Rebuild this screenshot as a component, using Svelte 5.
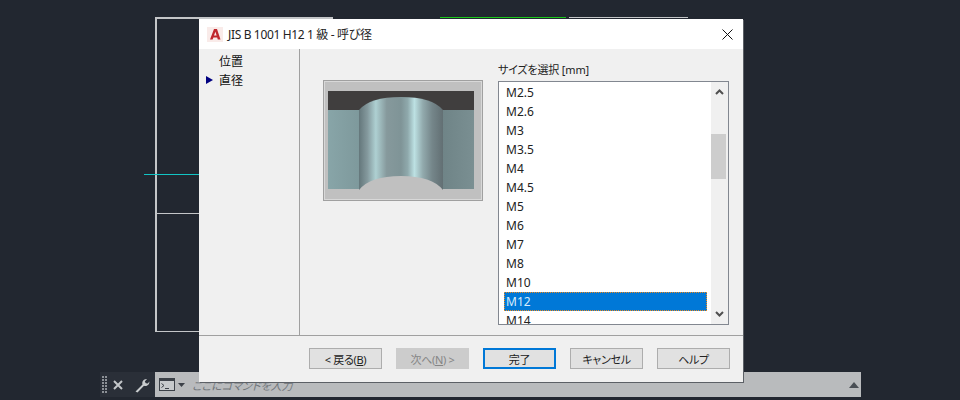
<script>
  const sizes = ["M2.5", "M2.6", "M3", "M3.5", "M4", "M4.5", "M5", "M6", "M7", "M8", "M10", "M12", "M14"];
  let selected = $state("M12");
</script>

<main class="desktop">
  <!-- drawing on the CAD canvas -->
  <div class="line white" style="left:156px;top:17px;width:177px;height:2px"></div>
  <div class="line white" style="left:155px;top:17px;width:2px;height:315px"></div>
  <div class="line white" style="left:156px;top:213px;width:44px;height:1px"></div>
  <div class="line white" style="left:156px;top:331px;width:44px;height:1px"></div>
  <div class="line cyan" style="left:144px;top:174px;width:56px;height:1px"></div>
  <div class="line green" style="left:440px;top:17px;width:126px;height:1px"></div>
  <div class="line white" style="left:569px;top:17px;width:119px;height:1px"></div>

  <div class="commandbar">
    <div class="tools">
      <svg class="grip" width="6" height="18" viewBox="0 0 6 18">
        {#each [0, 1, 2, 3, 4, 5] as r}
          <rect x="0" y={r * 3} width="2" height="2" fill="#8d9197" />
          <rect x="3" y={r * 3} width="2" height="2" fill="#8d9197" />
        {/each}
      </svg>
      <svg class="close" width="12" height="12" viewBox="0 0 12 12">
        <path d="M2 2L10 10M10 2L2 10" stroke="#c3c6c9" stroke-width="2" />
      </svg>
      <svg class="wrench" width="16" height="16" viewBox="0 0 16 16">
        <path d="M1.5 14.5L8.5 7.5C7.6 4.6 9.8 1.6 13 2L10.8 4.4L11.8 6.2L13.8 6.4L15.4 4.4C15.6 7.6 12.8 9.6 10 8.8L3.5 15.6Z" fill="#c9ccce" />
      </svg>
    </div>
    <div class="input">
      <svg class="prompt" width="16" height="13" viewBox="0 0 16 13">
        <rect x="0.5" y="0.5" width="15" height="12" fill="#c7cacc" stroke="#3c4148" />
        <rect x="0" y="0" width="16" height="3" fill="#3c4148" />
        <path d="M2.5 5.5L5 7.5L2.5 9.5M6 10.5H10" stroke="#3c4148" fill="none" />
      </svg>
      <svg class="caret" width="7" height="4" viewBox="0 0 7 4"><path d="M0 0H7L3.5 4Z" fill="#3c4148" /></svg>
      <span class="hint">ここにコマンドを入力</span>
      <svg class="history" width="10" height="6" viewBox="0 0 10 6"><path d="M5 0L10 6H0Z" fill="#4a4f55" /></svg>
    </div>
  </div>

  <section class="dialog">
    <header class="titlebar">
      <svg class="logo" width="16" height="15" viewBox="0 0 16 15">
        <rect width="16" height="15" fill="#f9ebe9" />
        <path d="M3 12.5L7 2H10L13.5 12.5H10.8L10.2 10.6H6.4L5.6 12.5ZM7 8.6H9.6L8.4 4.8Z" fill="#c0272d" fill-rule="evenodd" />
      </svg>
      <span class="title">JIS B 1001 H12 1 級 - 呼び径</span>
      <svg class="dismiss" width="11" height="11" viewBox="0 0 11 11">
        <path d="M0.5 0.5L10.5 10.5M10.5 0.5L0.5 10.5" stroke="#111" stroke-width="1" />
      </svg>
    </header>

    <div class="body">
      <nav class="steps">
        <div class="step">位置</div>
        <div class="step current">直径</div>
      </nav>

      <div class="content">
        <figure class="preview">
          <svg width="146" height="99" viewBox="0 0 146 99">
            <defs>
              <linearGradient id="cyl">
                <stop offset="0" stop-color="#64777b" />
                <stop offset="0.1" stop-color="#84999d" />
                <stop offset="0.2" stop-color="#aed0d2" />
                <stop offset="0.33" stop-color="#86999c" />
                <stop offset="0.5" stop-color="#7f9497" />
                <stop offset="0.58" stop-color="#8fa9ac" />
                <stop offset="0.66" stop-color="#bde1e3" />
                <stop offset="0.76" stop-color="#92aaad" />
                <stop offset="0.87" stop-color="#75868a" />
                <stop offset="1" stop-color="#626f73" />
              </linearGradient>
              <linearGradient id="wallL"><stop offset="0" stop-color="#88a5a8" /><stop offset="1" stop-color="#7e999c" /></linearGradient>
              <linearGradient id="wallR"><stop offset="0" stop-color="#6f8487" /><stop offset="1" stop-color="#7a8f92" /></linearGradient>
            </defs>
            <rect width="146" height="19" fill="#403e3e" />
            <rect y="19" width="31" height="79" fill="url(#wallL)" />
            <rect x="115" y="19" width="31" height="79" fill="url(#wallR)" />
            <path d="M31 19Q42 6 73 6T115 19V99H31Z" fill="url(#cyl)" />
            <path d="M31 99Q42 85 73 85T115 99Z" fill="#c0c0c0" />
          </svg>
        </figure>

        <div class="picker">
          <div class="picker-label">サイズを選択 [mm]</div>
          <div class="listbox">
            <ul>
              {#each sizes as size}
                <!-- svelte-ignore a11y_click_events_have_key_events -->
                <!-- svelte-ignore a11y_no_noninteractive_element_interactions -->
                <li class:active={size === selected} onclick={() => (selected = size)}>{size}</li>
              {/each}
            </ul>
            <div class="scrollbar">
              <svg width="9" height="6" viewBox="0 0 9 6"><path d="M1 5L4.5 1.5L8 5" fill="none" stroke="#505050" stroke-width="2" /></svg>
              <div class="track"><div class="thumb"></div></div>
              <svg width="9" height="6" viewBox="0 0 9 6"><path d="M1 1L4.5 4.5L8 1" fill="none" stroke="#505050" stroke-width="2" /></svg>
            </div>
          </div>
        </div>
      </div>
    </div>

    <footer class="actions">
      <button>&lt; 戻る(<u>B</u>)</button>
      <button disabled>次へ(<u>N</u>) &gt;</button>
      <button class="primary">完了</button>
      <button>キャンセル</button>
      <button>ヘルプ</button>
    </footer>
  </section>
</main>

<style>
  :global(body) {
    margin: 0;
    background: #222730;
  }
  .desktop {
    position: relative;
    width: 960px;
    height: 400px;
    overflow: hidden;
    background: #222730;
    font-family: "Noto Sans", "Noto Sans CJK JP", sans-serif;
    font-size: 12px;
    font-feature-settings: "palt";
    color: #111;
    display: flex;
    flex-direction: column;
    justify-content: flex-end;
  }
  .line {
    position: absolute;
  }
  .white {
    background: #c4c6c8;
  }
  .cyan {
    background: #12c4c4;
  }
  .green {
    background: #1cc81c;
  }

  .commandbar {
    display: flex;
    height: 25px;
    margin: 0 99px 3px 100px;
  }
  .tools {
    width: 55px;
    display: flex;
    align-items: center;
    background: #2a2f38;
  }
  .grip {
    margin-left: 2px;
  }
  .close {
    margin-left: 4px;
  }
  .wrench {
    margin-left: 10px;
  }
  .input {
    flex: 1;
    display: flex;
    align-items: center;
    background: #b9bbbd;
    padding: 0 2px 0 4px;
  }
  .caret {
    margin-left: 3px;
  }
  .hint {
    margin-left: 7px;
    font-size: 11px;
    font-style: italic;
    color: #71767b;
  }
  .history {
    margin-left: auto;
  }

  .dialog {
    position: absolute;
    left: 199px;
    top: 19px;
    width: 544px;
    height: 363px;
    box-sizing: border-box;
    display: flex;
    flex-direction: column;
    background: #f0f0f0;
    box-shadow: 1px 1px 0 #5c6066;
  }
  .titlebar {
    height: 30px;
    flex: none;
    display: flex;
    align-items: center;
    padding: 0 10px 0 8px;
    background: #fff;
  }
  .title {
    margin-left: 5px;
    color: #222;
    letter-spacing: -0.35px;
  }
  .dismiss {
    margin-left: auto;
  }

  .body {
    height: 287px;
    flex: none;
    display: flex;
    border-bottom: 1px solid #a0a0a0;
    box-sizing: border-box;
  }
  .steps {
    width: 101px;
    flex: none;
    box-sizing: border-box;
    border-right: 1px solid #a0a0a0;
    padding-top: 3px;
  }
  .step {
    position: relative;
    height: 19px;
    line-height: 19px;
    padding-left: 20px;
  }
  .step.current::before {
    content: "";
    position: absolute;
    left: 7px;
    top: 5px;
    border-left: 7px solid #000080;
    border-top: 4px solid transparent;
    border-bottom: 4px solid transparent;
  }
  .content {
    flex: 1;
    display: flex;
    align-items: flex-start;
    padding: 12px 14px 0 23px;
  }
  .preview {
    margin: 19px 0 0;
    width: 160px;
    height: 121px;
    box-sizing: border-box;
    flex: none;
    background: #c0c0c0;
    border: 1px solid #a0a0a0;
    box-shadow: inset 0 0 0 1px #d8d8d8;
    padding: 10px 0 0 4px;
  }
  .preview svg {
    display: block;
  }
  .picker {
    margin-left: 15px;
    flex: 1;
  }
  .picker-label {
    height: 20px;
    line-height: 18px;
    font-size: 11px;
    letter-spacing: -0.15px;
    color: #222;
  }
  .listbox {
    height: 244px;
    box-sizing: border-box;
    border: 1px solid #828790;
    background: #fff;
    display: flex;
    overflow: hidden;
  }
  ul {
    list-style: none;
    margin: 0;
    padding: 1px 4px 0 5px;
    flex: 1;
    overflow: hidden;
  }
  li {
    height: 19px;
    line-height: 19px;
    padding-left: 2px;
    color: #222;
    box-sizing: border-box;
  }
  li.active {
    background: #0078d7;
    color: #d8ecfb;
    outline: 1px dotted #f08a1c;
    outline-offset: -1px;
  }
  .scrollbar {
    width: 17px;
    flex: none;
    display: flex;
    flex-direction: column;
    align-items: center;
    background: #f0f0f0;
    padding: 7px 0;
    box-sizing: border-box;
  }
  .track {
    flex: 1;
    width: 100%;
  }
  .thumb {
    height: 45px;
    width: 15px;
    margin-top: 39px;
    background: #cdcdcd;
  }

  .actions {
    flex: 1;
    display: flex;
    justify-content: flex-end;
    align-items: flex-start;
    gap: 14px;
    padding: 12px 13px 0 0;
  }
  button {
    width: 73px;
    height: 21px;
    box-sizing: border-box;
    padding: 0;
    font: inherit;
    font-size: 11px;
    letter-spacing: -0.3px;
    font-feature-settings: inherit;
    color: #222;
    background: #e1e1e1;
    border: 1px solid #adadad;
  }
  button:disabled {
    background: #cccccc;
    border-color: #cccccc;
    color: #858585;
  }
  button.primary {
    border: 2px solid #0078d7;
  }
</style>
